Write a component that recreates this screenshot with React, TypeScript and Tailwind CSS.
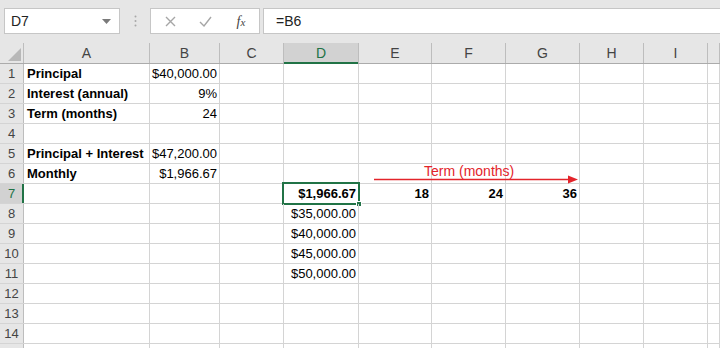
import React from 'react'

type Cell = { text: string; bold?: boolean; right?: boolean }

const cols = [
  { key: 'A', w: 'w-[126px]' },
  { key: 'B', w: 'w-[70px]' },
  { key: 'C', w: 'w-[64px]' },
  { key: 'D', w: 'w-[75px]' },
  { key: 'E', w: 'w-[73px]' },
  { key: 'F', w: 'w-[74px]' },
  { key: 'G', w: 'w-[74px]' },
  { key: 'H', w: 'w-[64px]' },
  { key: 'I', w: 'w-[64px]' },
  { key: 'J', w: 'flex-1' },
]

const data: Record<number, Record<string, Cell>> = {
  1: { A: { text: 'Principal', bold: true }, B: { text: '$40,000.00', right: true } },
  2: { A: { text: 'Interest (annual)', bold: true }, B: { text: '9%', right: true } },
  3: { A: { text: 'Term (months)', bold: true }, B: { text: '24', right: true } },
  5: { A: { text: 'Principal + Interest', bold: true }, B: { text: '$47,200.00', right: true } },
  6: { A: { text: 'Monthly', bold: true }, B: { text: '$1,966.67', right: true } },
  7: {
    D: { text: '$1,966.67', bold: true, right: true },
    E: { text: '18', bold: true, right: true },
    F: { text: '24', bold: true, right: true },
    G: { text: '36', bold: true, right: true },
  },
  8: { D: { text: '$35,000.00', right: true } },
  9: { D: { text: '$40,000.00', right: true } },
  10: { D: { text: '$45,000.00', right: true } },
  11: { D: { text: '$50,000.00', right: true } },
}

// row 15 is only a sliver at the bottom edge, its number is out of view
const rows = Array.from({ length: 15 }, (_, i) => i + 1)

export default function App() {
  return (
    <div className="relative w-[720px] h-[348px] overflow-hidden bg-white font-['Liberation_Sans',Arial,sans-serif] text-[13px] text-black">
      {/* Formula bar */}
      <div className="h-[43px] bg-[#e6e6e6] flex items-start pt-[8px]">
        <div className="ml-[4px] w-[116px] h-[26px] bg-white border border-[#c6c6c6] flex items-center justify-between pl-[6px] pr-[8px]">
          <span className="text-[14px] text-[#222]">D7</span>
          <svg width="9" height="5" viewBox="0 0 9 5">
            <polygon points="0,0 9,0 4.5,5" fill="#7a7a7a" />
          </svg>
        </div>
        <div className="w-[30px] h-[26px] flex items-center justify-center">
          <svg width="3" height="12" viewBox="0 0 3 12">
            <circle cx="1.5" cy="1.5" r="1" fill="#a8a8a8" />
            <circle cx="1.5" cy="6" r="1" fill="#a8a8a8" />
            <circle cx="1.5" cy="10.5" r="1" fill="#a8a8a8" />
          </svg>
        </div>
        <div className="w-[110px] h-[26px] bg-white border border-[#c6c6c6] flex items-center">
          <div className="w-[36px] flex justify-center pl-[2px]">
            <svg width="11" height="11" viewBox="0 0 11 11">
              <path d="M1 1 L10 10 M10 1 L1 10" stroke="#a6a6a6" strokeWidth="1.4" />
            </svg>
          </div>
          <div className="w-[36px] flex justify-center">
            <svg width="13" height="11" viewBox="0 0 13 11">
              <path d="M1 6 L5 10 L12 1" stroke="#a6a6a6" strokeWidth="1.4" fill="none" />
            </svg>
          </div>
          <div className="w-[36px] flex justify-center">
            <span className="font-['Liberation_Serif',serif] italic text-[14px] text-[#444]">
              f<span className="text-[11px]">x</span>
            </span>
          </div>
        </div>
        <div className="ml-[3px] flex-1 h-[26px] bg-white border-y border-l border-[#c6c6c6] flex items-center pl-[12px]">
          <span className="text-[14px] text-[#222]">=B6</span>
        </div>
      </div>

      {/* Column headers */}
      <div className="flex h-[21px] bg-[#e6e6e6] border-b border-[#ababab]">
        <div className="relative w-[24px] border-r border-[#bdbdbd]">
          <svg className="absolute right-[2px] bottom-[2px]" width="13" height="13" viewBox="0 0 13 13">
            <polygon points="13,0 13,13 0,13" fill="#b8b8b8" />
          </svg>
        </div>
        {cols.map((c) =>
          c.key === 'D' ? (
            <div
              key={c.key}
              className={`${c.w} relative flex items-center justify-center bg-[#d2d2d2] border-r border-[#bdbdbd] text-[#217346] text-[14px]`}
            >
              {c.key}
              <div className="absolute left-0 right-0 bottom-[-1px] h-[2px] bg-[#217346]" />
            </div>
          ) : (
            <div
              key={c.key}
              className={`${c.w} flex items-center justify-center border-r border-[#bdbdbd] text-[#444] text-[14px]`}
            >
              {c.key !== 'J' ? c.key : ''}
            </div>
          )
        )}
      </div>

      {/* Grid rows */}
      {rows.map((r) => (
        <div key={r} className="flex h-[20px] border-b border-[#d4d4d4]">
          <div
            className={`relative w-[24px] flex items-center justify-center pt-[1px] border-r border-[#bdbdbd] ${
              r === 7 ? 'bg-[#d2d2d2] text-[#217346]' : 'bg-[#e6e6e6] text-[#444]'
            }`}
          >
            {r < 15 ? r : ''}
            {r === 7 && <div className="absolute top-0 bottom-0 right-[-1px] w-[2px] bg-[#217346]" />}
          </div>
          {cols.map((c) => {
            const cell = data[r]?.[c.key]
            const selected = r === 7 && c.key === 'D'
            return (
              <div
                key={c.key}
                className={`${c.w} relative flex items-center pt-[1px] border-r border-[#d4d4d4] whitespace-nowrap ${
                  cell?.right ? 'justify-end pr-[2px]' : 'pl-[3px]'
                } ${cell?.bold ? 'font-bold' : ''}`}
              >
                {cell?.text}
                {selected && (
                  <>
                    <div className="absolute left-[-2px] top-[-2px] right-[-2px] bottom-[-2px] border-2 border-[#217346]" />
                    <div className="absolute right-[-4px] bottom-[-4px] w-[6px] h-[6px] bg-[#217346] border border-white" />
                  </>
                )}
              </div>
            )
          })}
        </div>
      ))}

      {/* Annotation arrow */}
      <div className="absolute left-[424px] top-[161px] text-[14px] text-[#e3242b]">Term (months)</div>
      <svg className="absolute left-[372px] top-[174px]" width="210" height="12" viewBox="0 0 210 12">
        <line x1="2" y1="5.5" x2="198" y2="5.5" stroke="#e3242b" strokeWidth="1.3" />
        <polygon points="196,1.5 206,5.5 196,9.5" fill="#e3242b" />
      </svg>
    </div>
  )
}
